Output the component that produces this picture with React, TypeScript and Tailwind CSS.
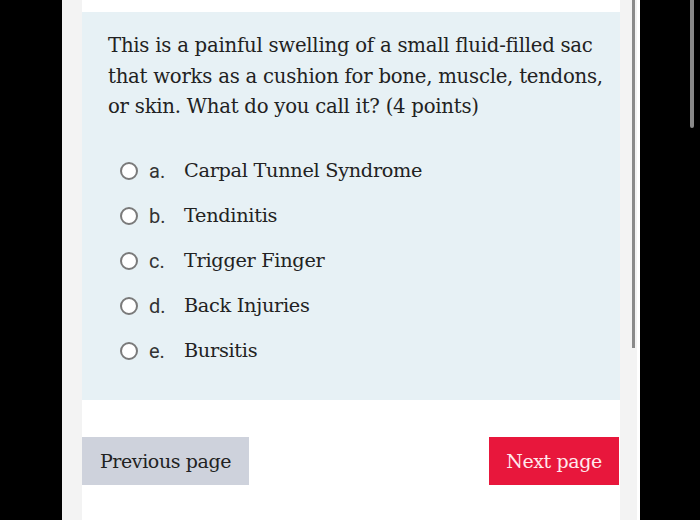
import React from "react";

const options = [
  { l: "a.", t: "Carpal Tunnel Syndrome" },
  { l: "b.", t: "Tendinitis" },
  { l: "c.", t: "Trigger Finger" },
  { l: "d.", t: "Back Injuries" },
  { l: "e.", t: "Bursitis" },
];

const slab = { fontFamily: '"DejaVu Serif", serif' };

export default function App() {
  return (
    <div className="flex w-[700px] h-[520px] bg-black overflow-hidden">
      <div className="w-[62px] shrink-0 bg-black" />
      <div className="w-[20px] shrink-0 bg-[#f3f3f3]" />
      <div className="w-[538px] shrink-0 bg-white flex flex-col pt-[12px]">
        <div className="bg-[#e7f1f5] h-[388px] pl-[26px] pr-[10px] pt-[19px] text-[#222]" style={slab}>
          <p className="text-[19.7px] leading-[30.5px] tracking-[-0.25px] whitespace-nowrap">
            This is a painful swelling of a small fluid-filled sac
            <br />
            that works as a cushion for bone, muscle, tendons,
            <br />
            or skin. What do you call it? (4 points)
          </p>
          <div className="mt-[26px] pl-[12px] flex flex-col">
            {options.map((o) => (
              <div key={o.l} className="h-[45px] flex items-center">
                <span className="w-[18px] h-[18px] rounded-full border-2 border-[#7a7a7a] bg-white shrink-0" />
                <span
                  className="ml-[11px] w-[35px] text-[20px] text-[#333]"
                  style={{ fontFamily: 'Roboto, "Noto Sans", sans-serif' }}
                >
                  {o.l}
                </span>
                <span className="text-[19.3px] tracking-[-0.3px]">{o.t}</span>
              </div>
            ))}
          </div>
        </div>
        <div className="flex justify-between items-start mt-[37px]" style={slab}>
          <div className="w-[167px] h-[48px] bg-[#ced2dc] flex items-center justify-center text-[19px] text-[#222] tracking-[-0.4px]">
            Previous page
          </div>
          <div className="w-[130px] h-[48px] bg-[#e8173c] flex items-center justify-center text-[19px] text-[#ffe9ec] tracking-[-0.4px] mr-[1px]">
            Next page
          </div>
        </div>
      </div>
      <div className="w-[20px] shrink-0 bg-[#f3f3f3] flex">
        <div className="ml-[12px] w-[3px] h-[348px] bg-[#8a8a8a]" />
        <div className="ml-[2px] w-[3px] h-full bg-white" />
      </div>
      <div className="w-[60px] shrink-0 bg-black flex">
        <div className="ml-[50px] w-[4px] h-[128px] bg-[#888] rounded-b-sm" />
      </div>
    </div>
  );
}
